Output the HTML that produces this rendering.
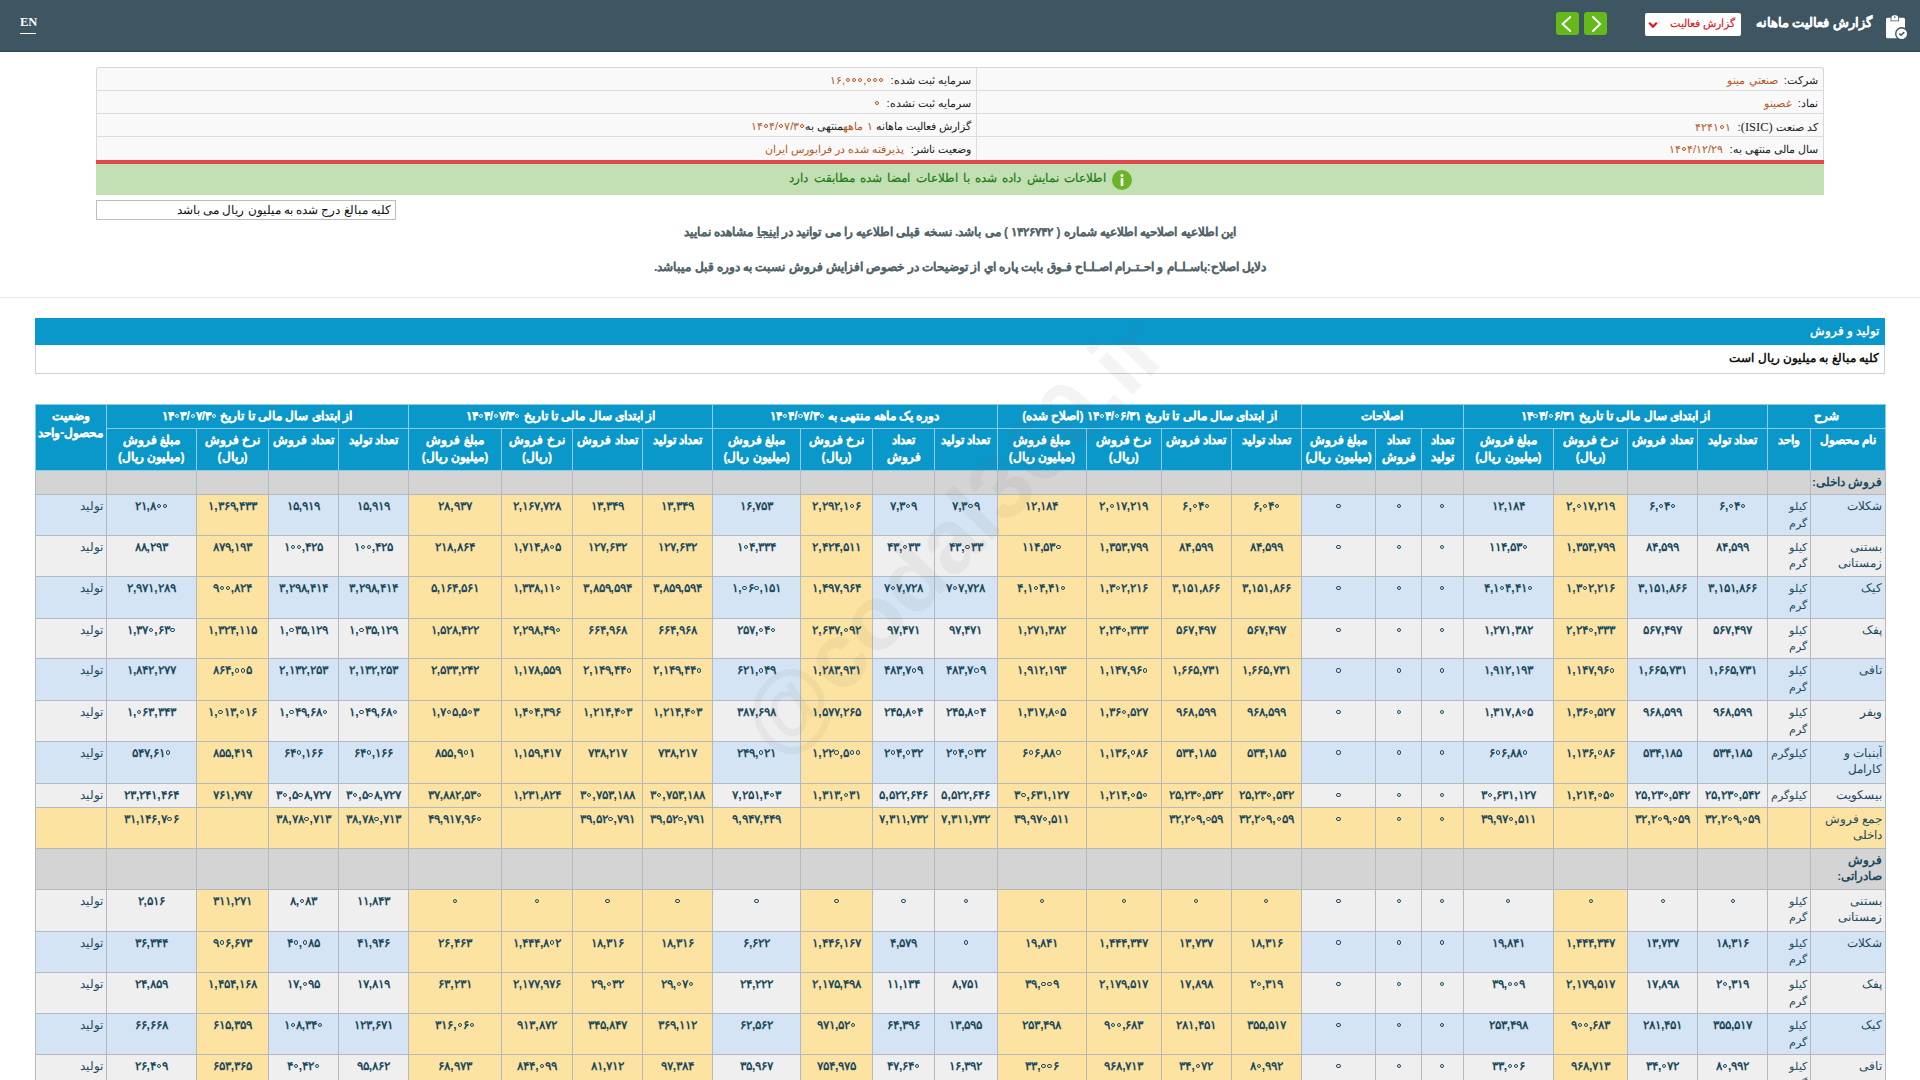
<!DOCTYPE html>
<html lang="fa" dir="rtl"><head><meta charset="utf-8"><title>گزارش فعالیت ماهانه</title>
<style>
*{box-sizing:border-box}
html,body{margin:0;padding:0;background:#fff;width:1920px;height:1080px;overflow:hidden}
body{font-family:"Liberation Sans",sans-serif;font-size:12px;color:#333;position:relative;direction:rtl}
.nav{position:absolute;left:0;top:0;width:1920px;height:52px;background:#3e5562;border-bottom:1px solid #34474f}
.en{position:absolute;left:20px;top:15px;font-family:"Liberation Serif",serif;font-size:12.5px;font-weight:bold;color:#fff;direction:ltr}
.en-u{position:absolute;left:20px;top:33px;width:16px;height:1px;background:#fff}
.ntitle{position:absolute;right:48px;top:15px;font-size:13.2px;-webkit-text-stroke:0.2px #fff;font-weight:bold;color:#fff;white-space:nowrap}
.dd{position:absolute;left:1645px;top:13px;width:96px;height:23px;background:#fff;border-radius:2px}
.dd span{position:absolute;right:6px;top:4px;color:#e1141d;font-size:11.2px;-webkit-text-stroke:0.15px #e1141d;white-space:nowrap}
.btn{position:absolute;top:12px;width:23px;height:23px;background:#66b91b;border-radius:3px}
.info{position:absolute;left:96px;top:67px;width:1728px;height:94px;border:1px solid #d8d8d8;border-bottom:none;border-radius:3px 3px 0 0;background:#f9f9f9}
.irow{position:absolute;left:0;width:1726px;height:1px;background:#dcdcdc}
.ivl{position:absolute;left:879px;top:0;width:1px;height:93px;background:#dcdcdc}
.il{position:absolute;white-space:nowrap;font-size:11.3px;color:#222}
.il b{font-weight:normal;color:#b8561d}
.redl{position:absolute;left:96px;top:160px;width:1728px;height:4px;background:#e04a4a}
.green{position:absolute;left:96px;top:164px;width:1728px;height:31px;background:#c2e0b3}
.gtxt{position:absolute;right:718px;top:7px;font-size:12.2px;word-spacing:1.9px;font-weight:normal;color:#237a18;-webkit-text-stroke:0.2px #237a18;white-space:nowrap}
.gicon{position:absolute;left:1016px;top:6px;width:20px;height:20px;border-radius:50%;background:#6db32a}
.note{position:absolute;left:96px;top:200px;width:300px;height:20px;border:1px solid #bcbcbc;background:#fff}
.note span{position:absolute;right:4px;top:2px;font-size:11.8px;color:#111;white-space:nowrap}
.msg{position:absolute;left:0;width:1920px;text-align:center;font-size:11.9px;font-weight:bold;color:#52656b;-webkit-text-stroke:0.15px #52656b;white-space:nowrap}
.hr{position:absolute;left:0;top:297px;width:1920px;height:1px;background:#e6e6e6}
.bluebar{position:absolute;left:35px;top:318px;width:1850px;height:27px;background:#0a98ca}
.bluebar span{position:absolute;right:6px;top:6px;color:#fff;font-weight:bold;font-size:11.5px;white-space:nowrap}
.wbox{position:absolute;left:35px;top:345px;width:1850px;height:29px;border:1px solid #cfcfcf;border-top:none;background:#fff}
.wbox span{position:absolute;right:5px;top:6px;color:#111;font-weight:bold;font-size:12px;white-space:nowrap}
table.grid{position:absolute;left:35px;top:404px;width:1850px;table-layout:fixed;border-collapse:collapse;direction:rtl}
.grid th{background:#0a98ca;color:#fff;font-weight:bold;-webkit-text-stroke:0.2px #fff;font-size:12px;border:1px solid #8fcbe6;padding:3px 2px;vertical-align:top;line-height:17px;text-align:center}
.grid td{border:1px solid #b4b9bf;padding:3px 3px;vertical-align:top;line-height:16.5px;text-align:center;color:#1c4a5e;font-size:12px;white-space:normal}
.grid td.r{text-align:right;font-weight:normal;font-size:11.4px}
.grid td.n{font-weight:bold}
.grid td.s{font-size:12.3px}
.grid td.nm{font-size:12px}
.grid td.b{font-weight:bold;white-space:nowrap;font-size:11.8px}
.lb{background:#d4e4f4}
.lg{background:#efefef}
.y{background:#fde3a1}
.g{background:#d4d4d4}
.wm{position:absolute;left:670px;top:491px;transform:rotate(-46deg);font-size:91px;font-weight:bold;color:rgba(110,110,110,0.075);transform-origin:50% 50%;white-space:nowrap;direction:ltr;pointer-events:none;font-family:"Liberation Sans",sans-serif;z-index:5;line-height:1}

.nb{unicode-bidi:isolate;direction:ltr}
.z{display:inline-block;width:6px;height:6px;position:relative;vertical-align:baseline}
.z::after{content:"";position:absolute;left:0.9px;top:-0.1px;width:4.2px;height:4.2px;box-sizing:border-box;border:1.3px solid currentColor;border-radius:50%}

</style></head><body>
<div class="nav">
  <div class="en">EN</div><div class="en-u"></div>
  <svg style="position:absolute;left:1884px;top:14px" width="25" height="26" viewBox="0 0 25 26">
    <rect x="2" y="3.8" width="19" height="20.5" rx="1.5" fill="#fff"/>
    <path d="M6.6 7.2 V4 A3.4 3.4 0 0 1 10 0.6 H11.6 A3.4 3.4 0 0 1 15 4 V7.2 Z" fill="#3e5562"/>
    <path d="M7.4 6.4 V4 A2.8 2.8 0 0 1 10.2 1.2 H11.4 A2.8 2.8 0 0 1 14.2 4 V6.4 Z" fill="#fff"/>
    <circle cx="10.8" cy="3.1" r="0.8" fill="#3e5562"/>
    <circle cx="17.7" cy="19.7" r="6.7" fill="#3e5562"/>
    <circle cx="17.7" cy="19.7" r="5.3" fill="#fff"/>
    <path d="M15.5 20 L17 21.2 L19.8 18.6" stroke="#3e5562" stroke-width="1.5" fill="none" stroke-linecap="round" stroke-linejoin="round"/>
  </svg>
  <div class="ntitle">گزارش فعالیت ماهانه</div>
  <div class="dd"><span>گزارش فعالیت</span>
    <svg style="position:absolute;left:3px;top:8px" width="10" height="8" viewBox="0 0 10 8"><path d="M1.2 1.8 L5 5.6 L8.8 1.8" stroke="#e1141d" stroke-width="2.2" fill="none"/></svg>
  </div>
  <div class="btn" style="left:1556px"><svg width="23" height="23" viewBox="0 0 23 23"><path d="M14.3 5 L6.6 12 L14.3 19" stroke="#fff" stroke-width="1.9" fill="none" stroke-linecap="round"/></svg></div>
  <div class="btn" style="left:1584px"><svg width="23" height="23" viewBox="0 0 23 23"><path d="M9 5 L16.2 12 L9 19" stroke="#fff" stroke-width="1.9" fill="none" stroke-linecap="round"/></svg></div>
</div>

<div class="info">
  <div class="irow" style="top:22px"></div>
  <div class="irow" style="top:45px"></div>
  <div class="irow" style="top:68px"></div>
  <div class="ivl"></div>
  <div class="il" style="right:5px;top:6px">شرکت:&nbsp; <b>صنعتي مينو</b></div>
  <div class="il" style="right:5px;top:29px">نماد:&nbsp; <b>غصينو</b></div>
  <div class="il" style="right:5px;top:52px">کد صنعت <span style="font-family:'Liberation Serif',serif;font-size:12.5px">(ISIC)</span>:&nbsp; <b><span dir="ltr" class="nb">۴۲۴۱<i class="z"></i>۱</span></b></div>
  <div class="il" style="right:5px;top:75px">سال مالی منتهی به:&nbsp; <b><span dir="ltr" class="nb">۱۴<i class="z"></i>۴/۱۲/۲۹</span></b></div>
  <div class="il" style="right:852px;top:6px">سرمایه ثبت شده:&nbsp; <b><span dir="ltr" class="nb">۱۶,<i class="z"></i><i class="z"></i><i class="z"></i>,<i class="z"></i><i class="z"></i><i class="z"></i></span></b></div>
  <div class="il" style="right:852px;top:29px">سرمایه ثبت نشده:&nbsp; <b><span dir="ltr" class="nb"><i class="z"></i></span></b></div>
  <div class="il" style="right:852px;top:52px">گزارش فعالیت ماهانه <b>۱ ماهه</b>منتهی به<b><span dir="ltr" class="nb">۱۴<i class="z"></i>۴/<i class="z"></i>۷/۳<i class="z"></i></span></b></div>
  <div class="il" style="right:852px;top:75px">وضعیت ناشر:&nbsp; <b>پذیرفته شده در فرابورس ایران</b></div>
</div>
<div class="redl"></div>
<div class="green">
  <div class="gtxt">اطلاعات نمایش داده شده با اطلاعات امضا شده مطابقت دارد</div>
  <div class="gicon"><svg width="20" height="20" viewBox="0 0 20 20"><circle cx="10" cy="5.5" r="1.5" fill="#fff"/><rect x="8.7" y="8" width="2.6" height="8" fill="#fff"/></svg></div>
</div>
<div class="note"><span>کلیه مبالغ درج شده به میلیون ریال می باشد</span></div>
<div class="msg" style="top:225px">این اطلاعیه اصلاحیه اطلاعیه شماره ( ۱۴۲۶۷۴۲ ) می باشد. نسخه قبلی اطلاعیه را می توانید در <u>اینجا</u> مشاهده نمایید</div>
<div class="msg" style="top:260px">دلایل اصلاح:باسـلـام و احـتـرام اصـلـاح فـوق بابت پاره اي از توضیحات در خصوص افزایش فروش نسبت به دوره قبل میباشد.</div>
<div class="hr"></div>
<div class="bluebar"><span>تولید و فروش</span></div>
<div class="wbox"><span>کلیه مبالغ به میلیون ریال است</span></div>
<div class="wm">@codal360.ir</div>

<table class="grid"><colgroup><col style="width:75px"><col style="width:43px"><col style="width:70px"><col style="width:70px"><col style="width:74px"><col style="width:90.5px"><col style="width:41.5px"><col style="width:46px"><col style="width:74px"><col style="width:70.5px"><col style="width:70px"><col style="width:74.5px"><col style="width:89.5px"><col style="width:62.5px"><col style="width:62px"><col style="width:72px"><col style="width:88px"><col style="width:70px"><col style="width:70px"><col style="width:71px"><col style="width:93px"><col style="width:70px"><col style="width:70px"><col style="width:72px"><col style="width:90.5px"><col style="width:70.5px"></colgroup>
<thead><tr style="height:24px">
<th colspan="2">شرح</th>
<th colspan="4">از ابتدای سال مالی تا تاریخ <span dir="ltr" class="nb">۱۴<i class="z"></i>۴/<i class="z"></i>۶/۳۱</span></th>
<th colspan="3">اصلاحات</th>
<th colspan="4">از ابتدای سال مالی تا تاریخ <span dir="ltr" class="nb">۱۴<i class="z"></i>۴/<i class="z"></i>۶/۳۱</span> (اصلاح شده)</th>
<th colspan="4">دوره یک ماهه منتهی به <span dir="ltr" class="nb">۱۴<i class="z"></i>۴/<i class="z"></i>۷/۳<i class="z"></i></span></th>
<th colspan="4">از ابتدای سال مالی تا تاریخ <span dir="ltr" class="nb">۱۴<i class="z"></i>۴/<i class="z"></i>۷/۳<i class="z"></i></span></th>
<th colspan="4">از ابتدای سال مالی تا تاریخ <span dir="ltr" class="nb">۱۴<i class="z"></i>۳/<i class="z"></i>۷/۳<i class="z"></i></span></th>
<th rowspan="2" class="st">وضعیت محصول-واحد</th>
</tr>
<tr style="height:42px">
<th>نام محصول</th><th>واحد</th>
<th>تعداد تولید</th><th>تعداد فروش</th><th>نرخ فروش (ریال)</th><th>مبلغ فروش (میلیون ریال)</th>
<th>تعداد تولید</th><th>تعداد فروش</th><th>مبلغ فروش (میلیون ریال)</th>
<th>تعداد تولید</th><th>تعداد فروش</th><th>نرخ فروش (ریال)</th><th>مبلغ فروش (میلیون ریال)</th>
<th>تعداد تولید</th><th>تعداد فروش</th><th>نرخ فروش (ریال)</th><th>مبلغ فروش (میلیون ریال)</th>
<th>تعداد تولید</th><th>تعداد فروش</th><th>نرخ فروش (ریال)</th><th>مبلغ فروش (میلیون ریال)</th>
<th>تعداد تولید</th><th>تعداد فروش</th><th>نرخ فروش (ریال)</th><th>مبلغ فروش (میلیون ریال)</th>
</tr></thead>
<tbody><tr style="height:24px"><td class="g r b">فروش داخلی:</td><td class="g"></td><td class="g"></td><td class="g"></td><td class="g"></td><td class="g"></td><td class="g"></td><td class="g"></td><td class="g"></td><td class="g"></td><td class="g"></td><td class="g"></td><td class="g"></td><td class="g"></td><td class="g"></td><td class="g"></td><td class="g"></td><td class="g"></td><td class="g"></td><td class="g"></td><td class="g"></td><td class="g"></td><td class="g"></td><td class="g"></td><td class="g"></td><td class="g"></td></tr><tr style="height:40.6px"><td class="lb r nm">شکلات</td><td class="lb r">کیلو گرم</td><td class="lb n"><span dir="ltr" class="nb">۶,<i class="z"></i>۴<i class="z"></i></span></td><td class="lb n"><span dir="ltr" class="nb">۶,<i class="z"></i>۴<i class="z"></i></span></td><td class="y n"><span dir="ltr" class="nb">۲,<i class="z"></i>۱۷,۲۱۹</span></td><td class="lb n"><span dir="ltr" class="nb">۱۲,۱۸۴</span></td><td class="lb n"><span dir="ltr" class="nb"><i class="z"></i></span></td><td class="lb n"><span dir="ltr" class="nb"><i class="z"></i></span></td><td class="lb n"><span dir="ltr" class="nb"><i class="z"></i></span></td><td class="y n"><span dir="ltr" class="nb">۶,<i class="z"></i>۴<i class="z"></i></span></td><td class="y n"><span dir="ltr" class="nb">۶,<i class="z"></i>۴<i class="z"></i></span></td><td class="y n"><span dir="ltr" class="nb">۲,<i class="z"></i>۱۷,۲۱۹</span></td><td class="y n"><span dir="ltr" class="nb">۱۲,۱۸۴</span></td><td class="lb n"><span dir="ltr" class="nb">۷,۳<i class="z"></i>۹</span></td><td class="lb n"><span dir="ltr" class="nb">۷,۳<i class="z"></i>۹</span></td><td class="y n"><span dir="ltr" class="nb">۲,۲۹۲,۱<i class="z"></i>۶</span></td><td class="lb n"><span dir="ltr" class="nb">۱۶,۷۵۳</span></td><td class="y n"><span dir="ltr" class="nb">۱۳,۳۴۹</span></td><td class="y n"><span dir="ltr" class="nb">۱۳,۳۴۹</span></td><td class="y n"><span dir="ltr" class="nb">۲,۱۶۷,۷۲۸</span></td><td class="y n"><span dir="ltr" class="nb">۲۸,۹۳۷</span></td><td class="lb n"><span dir="ltr" class="nb">۱۵,۹۱۹</span></td><td class="lb n"><span dir="ltr" class="nb">۱۵,۹۱۹</span></td><td class="y n"><span dir="ltr" class="nb">۱,۳۶۹,۴۳۳</span></td><td class="lb n"><span dir="ltr" class="nb">۲۱,۸<i class="z"></i><i class="z"></i></span></td><td class="lb r s">تولید</td></tr><tr style="height:41.7px"><td class="lg r nm">بستنی زمستانی</td><td class="lg r">کیلو گرم</td><td class="lg n"><span dir="ltr" class="nb">۸۴,۵۹۹</span></td><td class="lg n"><span dir="ltr" class="nb">۸۴,۵۹۹</span></td><td class="y n"><span dir="ltr" class="nb">۱,۳۵۳,۷۹۹</span></td><td class="lg n"><span dir="ltr" class="nb">۱۱۴,۵۳<i class="z"></i></span></td><td class="lg n"><span dir="ltr" class="nb"><i class="z"></i></span></td><td class="lg n"><span dir="ltr" class="nb"><i class="z"></i></span></td><td class="lg n"><span dir="ltr" class="nb"><i class="z"></i></span></td><td class="y n"><span dir="ltr" class="nb">۸۴,۵۹۹</span></td><td class="y n"><span dir="ltr" class="nb">۸۴,۵۹۹</span></td><td class="y n"><span dir="ltr" class="nb">۱,۳۵۳,۷۹۹</span></td><td class="y n"><span dir="ltr" class="nb">۱۱۴,۵۳<i class="z"></i></span></td><td class="lg n"><span dir="ltr" class="nb">۴۳,<i class="z"></i>۳۳</span></td><td class="lg n"><span dir="ltr" class="nb">۴۳,<i class="z"></i>۳۳</span></td><td class="y n"><span dir="ltr" class="nb">۲,۴۲۴,۵۱۱</span></td><td class="lg n"><span dir="ltr" class="nb">۱<i class="z"></i>۴,۳۳۴</span></td><td class="y n"><span dir="ltr" class="nb">۱۲۷,۶۳۲</span></td><td class="y n"><span dir="ltr" class="nb">۱۲۷,۶۳۲</span></td><td class="y n"><span dir="ltr" class="nb">۱,۷۱۴,۸<i class="z"></i>۵</span></td><td class="y n"><span dir="ltr" class="nb">۲۱۸,۸۶۴</span></td><td class="lg n"><span dir="ltr" class="nb">۱<i class="z"></i><i class="z"></i>,۴۲۵</span></td><td class="lg n"><span dir="ltr" class="nb">۱<i class="z"></i><i class="z"></i>,۴۲۵</span></td><td class="y n"><span dir="ltr" class="nb">۸۷۹,۱۹۳</span></td><td class="lg n"><span dir="ltr" class="nb">۸۸,۲۹۳</span></td><td class="lg r s">تولید</td></tr><tr style="height:41.5px"><td class="lb r nm">کیک</td><td class="lb r">کیلو گرم</td><td class="lb n"><span dir="ltr" class="nb">۳,۱۵۱,۸۶۶</span></td><td class="lb n"><span dir="ltr" class="nb">۳,۱۵۱,۸۶۶</span></td><td class="y n"><span dir="ltr" class="nb">۱,۳<i class="z"></i>۲,۲۱۶</span></td><td class="lb n"><span dir="ltr" class="nb">۴,۱<i class="z"></i>۴,۴۱<i class="z"></i></span></td><td class="lb n"><span dir="ltr" class="nb"><i class="z"></i></span></td><td class="lb n"><span dir="ltr" class="nb"><i class="z"></i></span></td><td class="lb n"><span dir="ltr" class="nb"><i class="z"></i></span></td><td class="y n"><span dir="ltr" class="nb">۳,۱۵۱,۸۶۶</span></td><td class="y n"><span dir="ltr" class="nb">۳,۱۵۱,۸۶۶</span></td><td class="y n"><span dir="ltr" class="nb">۱,۳<i class="z"></i>۲,۲۱۶</span></td><td class="y n"><span dir="ltr" class="nb">۴,۱<i class="z"></i>۴,۴۱<i class="z"></i></span></td><td class="lb n"><span dir="ltr" class="nb">۷<i class="z"></i>۷,۷۲۸</span></td><td class="lb n"><span dir="ltr" class="nb">۷<i class="z"></i>۷,۷۲۸</span></td><td class="y n"><span dir="ltr" class="nb">۱,۴۹۷,۹۶۴</span></td><td class="lb n"><span dir="ltr" class="nb">۱,<i class="z"></i>۶<i class="z"></i>,۱۵۱</span></td><td class="y n"><span dir="ltr" class="nb">۳,۸۵۹,۵۹۴</span></td><td class="y n"><span dir="ltr" class="nb">۳,۸۵۹,۵۹۴</span></td><td class="y n"><span dir="ltr" class="nb">۱,۳۳۸,۱۱<i class="z"></i></span></td><td class="y n"><span dir="ltr" class="nb">۵,۱۶۴,۵۶۱</span></td><td class="lb n"><span dir="ltr" class="nb">۳,۲۹۸,۴۱۴</span></td><td class="lb n"><span dir="ltr" class="nb">۳,۲۹۸,۴۱۴</span></td><td class="y n"><span dir="ltr" class="nb">۹<i class="z"></i><i class="z"></i>,۸۲۴</span></td><td class="lb n"><span dir="ltr" class="nb">۲,۹۷۱,۲۸۹</span></td><td class="lb r s">تولید</td></tr><tr style="height:40.7px"><td class="lg r nm">پفک</td><td class="lg r">کیلو گرم</td><td class="lg n"><span dir="ltr" class="nb">۵۶۷,۴۹۷</span></td><td class="lg n"><span dir="ltr" class="nb">۵۶۷,۴۹۷</span></td><td class="y n"><span dir="ltr" class="nb">۲,۲۴<i class="z"></i>,۳۳۳</span></td><td class="lg n"><span dir="ltr" class="nb">۱,۲۷۱,۳۸۲</span></td><td class="lg n"><span dir="ltr" class="nb"><i class="z"></i></span></td><td class="lg n"><span dir="ltr" class="nb"><i class="z"></i></span></td><td class="lg n"><span dir="ltr" class="nb"><i class="z"></i></span></td><td class="y n"><span dir="ltr" class="nb">۵۶۷,۴۹۷</span></td><td class="y n"><span dir="ltr" class="nb">۵۶۷,۴۹۷</span></td><td class="y n"><span dir="ltr" class="nb">۲,۲۴<i class="z"></i>,۳۳۳</span></td><td class="y n"><span dir="ltr" class="nb">۱,۲۷۱,۳۸۲</span></td><td class="lg n"><span dir="ltr" class="nb">۹۷,۴۷۱</span></td><td class="lg n"><span dir="ltr" class="nb">۹۷,۴۷۱</span></td><td class="y n"><span dir="ltr" class="nb">۲,۶۳۷,<i class="z"></i>۹۲</span></td><td class="lg n"><span dir="ltr" class="nb">۲۵۷,<i class="z"></i>۴<i class="z"></i></span></td><td class="y n"><span dir="ltr" class="nb">۶۶۴,۹۶۸</span></td><td class="y n"><span dir="ltr" class="nb">۶۶۴,۹۶۸</span></td><td class="y n"><span dir="ltr" class="nb">۲,۲۹۸,۴۹<i class="z"></i></span></td><td class="y n"><span dir="ltr" class="nb">۱,۵۲۸,۴۲۲</span></td><td class="lg n"><span dir="ltr" class="nb">۱,<i class="z"></i>۳۵,۱۲۹</span></td><td class="lg n"><span dir="ltr" class="nb">۱,<i class="z"></i>۳۵,۱۲۹</span></td><td class="y n"><span dir="ltr" class="nb">۱,۳۲۴,۱۱۵</span></td><td class="lg n"><span dir="ltr" class="nb">۱,۳۷<i class="z"></i>,۶۳<i class="z"></i></span></td><td class="lg r s">تولید</td></tr><tr style="height:41.8px"><td class="lb r nm">تافی</td><td class="lb r">کیلو گرم</td><td class="lb n"><span dir="ltr" class="nb">۱,۶۶۵,۷۳۱</span></td><td class="lb n"><span dir="ltr" class="nb">۱,۶۶۵,۷۳۱</span></td><td class="y n"><span dir="ltr" class="nb">۱,۱۴۷,۹۶<i class="z"></i></span></td><td class="lb n"><span dir="ltr" class="nb">۱,۹۱۲,۱۹۳</span></td><td class="lb n"><span dir="ltr" class="nb"><i class="z"></i></span></td><td class="lb n"><span dir="ltr" class="nb"><i class="z"></i></span></td><td class="lb n"><span dir="ltr" class="nb"><i class="z"></i></span></td><td class="y n"><span dir="ltr" class="nb">۱,۶۶۵,۷۳۱</span></td><td class="y n"><span dir="ltr" class="nb">۱,۶۶۵,۷۳۱</span></td><td class="y n"><span dir="ltr" class="nb">۱,۱۴۷,۹۶<i class="z"></i></span></td><td class="y n"><span dir="ltr" class="nb">۱,۹۱۲,۱۹۳</span></td><td class="lb n"><span dir="ltr" class="nb">۴۸۳,۷<i class="z"></i>۹</span></td><td class="lb n"><span dir="ltr" class="nb">۴۸۳,۷<i class="z"></i>۹</span></td><td class="y n"><span dir="ltr" class="nb">۱,۲۸۳,۹۳۱</span></td><td class="lb n"><span dir="ltr" class="nb">۶۲۱,<i class="z"></i>۴۹</span></td><td class="y n"><span dir="ltr" class="nb">۲,۱۴۹,۴۴<i class="z"></i></span></td><td class="y n"><span dir="ltr" class="nb">۲,۱۴۹,۴۴<i class="z"></i></span></td><td class="y n"><span dir="ltr" class="nb">۱,۱۷۸,۵۵۹</span></td><td class="y n"><span dir="ltr" class="nb">۲,۵۳۳,۲۴۲</span></td><td class="lb n"><span dir="ltr" class="nb">۲,۱۳۲,۲۵۳</span></td><td class="lb n"><span dir="ltr" class="nb">۲,۱۳۲,۲۵۳</span></td><td class="y n"><span dir="ltr" class="nb">۸۶۴,<i class="z"></i><i class="z"></i>۵</span></td><td class="lb n"><span dir="ltr" class="nb">۱,۸۴۲,۲۷۷</span></td><td class="lb r s">تولید</td></tr><tr style="height:40.3px"><td class="lg r nm">ویفر</td><td class="lg r">کیلو گرم</td><td class="lg n"><span dir="ltr" class="nb">۹۶۸,۵۹۹</span></td><td class="lg n"><span dir="ltr" class="nb">۹۶۸,۵۹۹</span></td><td class="y n"><span dir="ltr" class="nb">۱,۳۶<i class="z"></i>,۵۲۷</span></td><td class="lg n"><span dir="ltr" class="nb">۱,۳۱۷,۸<i class="z"></i>۵</span></td><td class="lg n"><span dir="ltr" class="nb"><i class="z"></i></span></td><td class="lg n"><span dir="ltr" class="nb"><i class="z"></i></span></td><td class="lg n"><span dir="ltr" class="nb"><i class="z"></i></span></td><td class="y n"><span dir="ltr" class="nb">۹۶۸,۵۹۹</span></td><td class="y n"><span dir="ltr" class="nb">۹۶۸,۵۹۹</span></td><td class="y n"><span dir="ltr" class="nb">۱,۳۶<i class="z"></i>,۵۲۷</span></td><td class="y n"><span dir="ltr" class="nb">۱,۳۱۷,۸<i class="z"></i>۵</span></td><td class="lg n"><span dir="ltr" class="nb">۲۴۵,۸<i class="z"></i>۴</span></td><td class="lg n"><span dir="ltr" class="nb">۲۴۵,۸<i class="z"></i>۴</span></td><td class="y n"><span dir="ltr" class="nb">۱,۵۷۷,۲۶۵</span></td><td class="lg n"><span dir="ltr" class="nb">۳۸۷,۶۹۸</span></td><td class="y n"><span dir="ltr" class="nb">۱,۲۱۴,۴<i class="z"></i>۳</span></td><td class="y n"><span dir="ltr" class="nb">۱,۲۱۴,۴<i class="z"></i>۳</span></td><td class="y n"><span dir="ltr" class="nb">۱,۴<i class="z"></i>۴,۳۹۶</span></td><td class="y n"><span dir="ltr" class="nb">۱,۷<i class="z"></i>۵,۵<i class="z"></i>۳</span></td><td class="lg n"><span dir="ltr" class="nb">۱,<i class="z"></i>۴۹,۶۸<i class="z"></i></span></td><td class="lg n"><span dir="ltr" class="nb">۱,<i class="z"></i>۴۹,۶۸<i class="z"></i></span></td><td class="y n"><span dir="ltr" class="nb">۱,<i class="z"></i>۱۳,<i class="z"></i>۱۶</span></td><td class="lg n"><span dir="ltr" class="nb">۱,<i class="z"></i>۶۳,۳۴۳</span></td><td class="lg r s">تولید</td></tr><tr style="height:42.3px"><td class="lb r nm">آبنبات و<br>کارامل</td><td class="lb r">کیلوگرم</td><td class="lb n"><span dir="ltr" class="nb">۵۳۴,۱۸۵</span></td><td class="lb n"><span dir="ltr" class="nb">۵۳۴,۱۸۵</span></td><td class="y n"><span dir="ltr" class="nb">۱,۱۳۶,<i class="z"></i>۸۶</span></td><td class="lb n"><span dir="ltr" class="nb">۶<i class="z"></i>۶,۸۸<i class="z"></i></span></td><td class="lb n"><span dir="ltr" class="nb"><i class="z"></i></span></td><td class="lb n"><span dir="ltr" class="nb"><i class="z"></i></span></td><td class="lb n"><span dir="ltr" class="nb"><i class="z"></i></span></td><td class="y n"><span dir="ltr" class="nb">۵۳۴,۱۸۵</span></td><td class="y n"><span dir="ltr" class="nb">۵۳۴,۱۸۵</span></td><td class="y n"><span dir="ltr" class="nb">۱,۱۳۶,<i class="z"></i>۸۶</span></td><td class="y n"><span dir="ltr" class="nb">۶<i class="z"></i>۶,۸۸<i class="z"></i></span></td><td class="lb n"><span dir="ltr" class="nb">۲<i class="z"></i>۴,<i class="z"></i>۳۲</span></td><td class="lb n"><span dir="ltr" class="nb">۲<i class="z"></i>۴,<i class="z"></i>۳۲</span></td><td class="y n"><span dir="ltr" class="nb">۱,۲۲<i class="z"></i>,۵<i class="z"></i><i class="z"></i></span></td><td class="lb n"><span dir="ltr" class="nb">۲۴۹,<i class="z"></i>۲۱</span></td><td class="y n"><span dir="ltr" class="nb">۷۳۸,۲۱۷</span></td><td class="y n"><span dir="ltr" class="nb">۷۳۸,۲۱۷</span></td><td class="y n"><span dir="ltr" class="nb">۱,۱۵۹,۴۱۷</span></td><td class="y n"><span dir="ltr" class="nb">۸۵۵,۹<i class="z"></i>۱</span></td><td class="lb n"><span dir="ltr" class="nb">۶۴<i class="z"></i>,۱۶۶</span></td><td class="lb n"><span dir="ltr" class="nb">۶۴<i class="z"></i>,۱۶۶</span></td><td class="y n"><span dir="ltr" class="nb">۸۵۵,۴۱۹</span></td><td class="lb n"><span dir="ltr" class="nb">۵۴۷,۶۱<i class="z"></i></span></td><td class="lb r s">تولید</td></tr><tr style="height:24px"><td class="lg r nm">بیسکویت</td><td class="lg r">کیلوگرم</td><td class="lg n"><span dir="ltr" class="nb">۲۵,۲۳<i class="z"></i>,۵۴۲</span></td><td class="lg n"><span dir="ltr" class="nb">۲۵,۲۳<i class="z"></i>,۵۴۲</span></td><td class="y n"><span dir="ltr" class="nb">۱,۲۱۴,<i class="z"></i>۵<i class="z"></i></span></td><td class="lg n"><span dir="ltr" class="nb">۳<i class="z"></i>,۶۳۱,۱۲۷</span></td><td class="lg n"><span dir="ltr" class="nb"><i class="z"></i></span></td><td class="lg n"><span dir="ltr" class="nb"><i class="z"></i></span></td><td class="lg n"><span dir="ltr" class="nb"><i class="z"></i></span></td><td class="y n"><span dir="ltr" class="nb">۲۵,۲۳<i class="z"></i>,۵۴۲</span></td><td class="y n"><span dir="ltr" class="nb">۲۵,۲۳<i class="z"></i>,۵۴۲</span></td><td class="y n"><span dir="ltr" class="nb">۱,۲۱۴,<i class="z"></i>۵<i class="z"></i></span></td><td class="y n"><span dir="ltr" class="nb">۳<i class="z"></i>,۶۳۱,۱۲۷</span></td><td class="lg n"><span dir="ltr" class="nb">۵,۵۲۲,۶۴۶</span></td><td class="lg n"><span dir="ltr" class="nb">۵,۵۲۲,۶۴۶</span></td><td class="y n"><span dir="ltr" class="nb">۱,۳۱۳,<i class="z"></i>۳۱</span></td><td class="lg n"><span dir="ltr" class="nb">۷,۲۵۱,۴<i class="z"></i>۳</span></td><td class="y n"><span dir="ltr" class="nb">۳<i class="z"></i>,۷۵۳,۱۸۸</span></td><td class="y n"><span dir="ltr" class="nb">۳<i class="z"></i>,۷۵۳,۱۸۸</span></td><td class="y n"><span dir="ltr" class="nb">۱,۲۳۱,۸۲۴</span></td><td class="y n"><span dir="ltr" class="nb">۳۷,۸۸۲,۵۳<i class="z"></i></span></td><td class="lg n"><span dir="ltr" class="nb">۳<i class="z"></i>,۵<i class="z"></i>۸,۷۲۷</span></td><td class="lg n"><span dir="ltr" class="nb">۳<i class="z"></i>,۵<i class="z"></i>۸,۷۲۷</span></td><td class="y n"><span dir="ltr" class="nb">۷۶۱,۷۹۷</span></td><td class="lg n"><span dir="ltr" class="nb">۲۳,۲۴۱,۴۶۴</span></td><td class="lg r s">تولید</td></tr><tr style="height:40.9px"><td class="y r nm">جمع فروش داخلی</td><td class="y r"></td><td class="y n"><span dir="ltr" class="nb">۳۲,۲<i class="z"></i>۹,<i class="z"></i>۵۹</span></td><td class="y n"><span dir="ltr" class="nb">۳۲,۲<i class="z"></i>۹,<i class="z"></i>۵۹</span></td><td class="y n"></td><td class="y n"><span dir="ltr" class="nb">۳۹,۹۷<i class="z"></i>,۵۱۱</span></td><td class="y n"><span dir="ltr" class="nb"><i class="z"></i></span></td><td class="y n"><span dir="ltr" class="nb"><i class="z"></i></span></td><td class="y n"><span dir="ltr" class="nb"><i class="z"></i></span></td><td class="y n"><span dir="ltr" class="nb">۳۲,۲<i class="z"></i>۹,<i class="z"></i>۵۹</span></td><td class="y n"><span dir="ltr" class="nb">۳۲,۲<i class="z"></i>۹,<i class="z"></i>۵۹</span></td><td class="y n"></td><td class="y n"><span dir="ltr" class="nb">۳۹,۹۷<i class="z"></i>,۵۱۱</span></td><td class="y n"><span dir="ltr" class="nb">۷,۳۱۱,۷۳۲</span></td><td class="y n"><span dir="ltr" class="nb">۷,۳۱۱,۷۳۲</span></td><td class="y n"></td><td class="y n"><span dir="ltr" class="nb">۹,۹۴۷,۴۴۹</span></td><td class="y n"><span dir="ltr" class="nb">۳۹,۵۲<i class="z"></i>,۷۹۱</span></td><td class="y n"><span dir="ltr" class="nb">۳۹,۵۲<i class="z"></i>,۷۹۱</span></td><td class="y n"></td><td class="y n"><span dir="ltr" class="nb">۴۹,۹۱۷,۹۶<i class="z"></i></span></td><td class="y n"><span dir="ltr" class="nb">۳۸,۷۸<i class="z"></i>,۷۱۳</span></td><td class="y n"><span dir="ltr" class="nb">۳۸,۷۸<i class="z"></i>,۷۱۳</span></td><td class="y n"></td><td class="y n"><span dir="ltr" class="nb">۳۱,۱۴۶,۷<i class="z"></i>۶</span></td><td class="y r s"></td></tr><tr style="height:41.2px"><td class="g r b">فروش<br>صادراتی:</td><td class="g"></td><td class="g"></td><td class="g"></td><td class="g"></td><td class="g"></td><td class="g"></td><td class="g"></td><td class="g"></td><td class="g"></td><td class="g"></td><td class="g"></td><td class="g"></td><td class="g"></td><td class="g"></td><td class="g"></td><td class="g"></td><td class="g"></td><td class="g"></td><td class="g"></td><td class="g"></td><td class="g"></td><td class="g"></td><td class="g"></td><td class="g"></td><td class="g"></td></tr><tr style="height:41.6px"><td class="lg r nm">بستنی زمستانی</td><td class="lg r">کیلو گرم</td><td class="lg n"><span dir="ltr" class="nb"><i class="z"></i></span></td><td class="lg n"><span dir="ltr" class="nb"><i class="z"></i></span></td><td class="y n"><span dir="ltr" class="nb"><i class="z"></i></span></td><td class="lg n"><span dir="ltr" class="nb"><i class="z"></i></span></td><td class="lg n"><span dir="ltr" class="nb"><i class="z"></i></span></td><td class="lg n"><span dir="ltr" class="nb"><i class="z"></i></span></td><td class="lg n"><span dir="ltr" class="nb"><i class="z"></i></span></td><td class="y n"><span dir="ltr" class="nb"><i class="z"></i></span></td><td class="y n"><span dir="ltr" class="nb"><i class="z"></i></span></td><td class="y n"><span dir="ltr" class="nb"><i class="z"></i></span></td><td class="y n"><span dir="ltr" class="nb"><i class="z"></i></span></td><td class="lg n"><span dir="ltr" class="nb"><i class="z"></i></span></td><td class="lg n"><span dir="ltr" class="nb"><i class="z"></i></span></td><td class="y n"><span dir="ltr" class="nb"><i class="z"></i></span></td><td class="lg n"><span dir="ltr" class="nb"><i class="z"></i></span></td><td class="y n"><span dir="ltr" class="nb"><i class="z"></i></span></td><td class="y n"><span dir="ltr" class="nb"><i class="z"></i></span></td><td class="y n"><span dir="ltr" class="nb"><i class="z"></i></span></td><td class="y n"><span dir="ltr" class="nb"><i class="z"></i></span></td><td class="lg n"><span dir="ltr" class="nb">۱۱,۸۴۳</span></td><td class="lg n"><span dir="ltr" class="nb">۸,<i class="z"></i>۸۳</span></td><td class="y n"><span dir="ltr" class="nb">۳۱۱,۲۷۱</span></td><td class="lg n"><span dir="ltr" class="nb">۲,۵۱۶</span></td><td class="lg r s">تولید</td></tr><tr style="height:41.5px"><td class="lb r nm">شکلات</td><td class="lb r">کیلو گرم</td><td class="lb n"><span dir="ltr" class="nb">۱۸,۳۱۶</span></td><td class="lb n"><span dir="ltr" class="nb">۱۳,۷۳۷</span></td><td class="y n"><span dir="ltr" class="nb">۱,۴۴۴,۳۴۷</span></td><td class="lb n"><span dir="ltr" class="nb">۱۹,۸۴۱</span></td><td class="lb n"><span dir="ltr" class="nb"><i class="z"></i></span></td><td class="lb n"><span dir="ltr" class="nb"><i class="z"></i></span></td><td class="lb n"><span dir="ltr" class="nb"><i class="z"></i></span></td><td class="y n"><span dir="ltr" class="nb">۱۸,۳۱۶</span></td><td class="y n"><span dir="ltr" class="nb">۱۳,۷۳۷</span></td><td class="y n"><span dir="ltr" class="nb">۱,۴۴۴,۳۴۷</span></td><td class="y n"><span dir="ltr" class="nb">۱۹,۸۴۱</span></td><td class="lb n"><span dir="ltr" class="nb"><i class="z"></i></span></td><td class="lb n"><span dir="ltr" class="nb">۴,۵۷۹</span></td><td class="y n"><span dir="ltr" class="nb">۱,۴۴۶,۱۶۷</span></td><td class="lb n"><span dir="ltr" class="nb">۶,۶۲۲</span></td><td class="y n"><span dir="ltr" class="nb">۱۸,۳۱۶</span></td><td class="y n"><span dir="ltr" class="nb">۱۸,۳۱۶</span></td><td class="y n"><span dir="ltr" class="nb">۱,۴۴۴,۸<i class="z"></i>۲</span></td><td class="y n"><span dir="ltr" class="nb">۲۶,۴۶۳</span></td><td class="lb n"><span dir="ltr" class="nb">۴۱,۹۴۶</span></td><td class="lb n"><span dir="ltr" class="nb">۴<i class="z"></i>,<i class="z"></i>۸۵</span></td><td class="y n"><span dir="ltr" class="nb">۹<i class="z"></i>۶,۶۷۳</span></td><td class="lb n"><span dir="ltr" class="nb">۳۶,۳۴۴</span></td><td class="lb r s">تولید</td></tr><tr style="height:41.1px"><td class="lg r nm">پفک</td><td class="lg r">کیلو گرم</td><td class="lg n"><span dir="ltr" class="nb">۲<i class="z"></i>,۳۱۹</span></td><td class="lg n"><span dir="ltr" class="nb">۱۷,۸۹۸</span></td><td class="y n"><span dir="ltr" class="nb">۲,۱۷۹,۵۱۷</span></td><td class="lg n"><span dir="ltr" class="nb">۳۹,<i class="z"></i><i class="z"></i>۹</span></td><td class="lg n"><span dir="ltr" class="nb"><i class="z"></i></span></td><td class="lg n"><span dir="ltr" class="nb"><i class="z"></i></span></td><td class="lg n"><span dir="ltr" class="nb"><i class="z"></i></span></td><td class="y n"><span dir="ltr" class="nb">۲<i class="z"></i>,۳۱۹</span></td><td class="y n"><span dir="ltr" class="nb">۱۷,۸۹۸</span></td><td class="y n"><span dir="ltr" class="nb">۲,۱۷۹,۵۱۷</span></td><td class="y n"><span dir="ltr" class="nb">۳۹,<i class="z"></i><i class="z"></i>۹</span></td><td class="lg n"><span dir="ltr" class="nb">۸,۷۵۱</span></td><td class="lg n"><span dir="ltr" class="nb">۱۱,۱۳۴</span></td><td class="y n"><span dir="ltr" class="nb">۲,۱۷۵,۴۹۸</span></td><td class="lg n"><span dir="ltr" class="nb">۲۴,۲۲۲</span></td><td class="y n"><span dir="ltr" class="nb">۲۹,<i class="z"></i>۷<i class="z"></i></span></td><td class="y n"><span dir="ltr" class="nb">۲۹,<i class="z"></i>۳۲</span></td><td class="y n"><span dir="ltr" class="nb">۲,۱۷۷,۹۷۶</span></td><td class="y n"><span dir="ltr" class="nb">۶۳,۲۳۱</span></td><td class="lg n"><span dir="ltr" class="nb">۱۷,۸۱۹</span></td><td class="lg n"><span dir="ltr" class="nb">۱۷,<i class="z"></i>۹۵</span></td><td class="y n"><span dir="ltr" class="nb">۱,۴۵۴,۱۶۸</span></td><td class="lg n"><span dir="ltr" class="nb">۲۴,۸۵۹</span></td><td class="lg r s">تولید</td></tr><tr style="height:40.9px"><td class="lb r nm">کیک</td><td class="lb r">کیلو گرم</td><td class="lb n"><span dir="ltr" class="nb">۳۵۵,۵۱۷</span></td><td class="lb n"><span dir="ltr" class="nb">۲۸۱,۴۵۱</span></td><td class="y n"><span dir="ltr" class="nb">۹<i class="z"></i><i class="z"></i>,۶۸۳</span></td><td class="lb n"><span dir="ltr" class="nb">۲۵۳,۴۹۸</span></td><td class="lb n"><span dir="ltr" class="nb"><i class="z"></i></span></td><td class="lb n"><span dir="ltr" class="nb"><i class="z"></i></span></td><td class="lb n"><span dir="ltr" class="nb"><i class="z"></i></span></td><td class="y n"><span dir="ltr" class="nb">۳۵۵,۵۱۷</span></td><td class="y n"><span dir="ltr" class="nb">۲۸۱,۴۵۱</span></td><td class="y n"><span dir="ltr" class="nb">۹<i class="z"></i><i class="z"></i>,۶۸۳</span></td><td class="y n"><span dir="ltr" class="nb">۲۵۳,۴۹۸</span></td><td class="lb n"><span dir="ltr" class="nb">۱۳,۵۹۵</span></td><td class="lb n"><span dir="ltr" class="nb">۶۴,۳۹۶</span></td><td class="y n"><span dir="ltr" class="nb">۹۷۱,۵۲<i class="z"></i></span></td><td class="lb n"><span dir="ltr" class="nb">۶۲,۵۶۲</span></td><td class="y n"><span dir="ltr" class="nb">۳۶۹,۱۱۲</span></td><td class="y n"><span dir="ltr" class="nb">۳۴۵,۸۴۷</span></td><td class="y n"><span dir="ltr" class="nb">۹۱۳,۸۷۲</span></td><td class="y n"><span dir="ltr" class="nb">۳۱۶,<i class="z"></i>۶<i class="z"></i></span></td><td class="lb n"><span dir="ltr" class="nb">۱۲۳,۶۷۱</span></td><td class="lb n"><span dir="ltr" class="nb">۱<i class="z"></i>۸,۳۴<i class="z"></i></span></td><td class="y n"><span dir="ltr" class="nb">۶۱۵,۳۵۹</span></td><td class="lb n"><span dir="ltr" class="nb">۶۶,۶۶۸</span></td><td class="lb r s">تولید</td></tr><tr style="height:41px"><td class="lg r nm">تافی</td><td class="lg r">کیلو گرم</td><td class="lg n"><span dir="ltr" class="nb">۸<i class="z"></i>,۹۹۲</span></td><td class="lg n"><span dir="ltr" class="nb">۳۴,<i class="z"></i>۷۲</span></td><td class="y n"><span dir="ltr" class="nb">۹۶۸,۷۱۳</span></td><td class="lg n"><span dir="ltr" class="nb">۳۳,<i class="z"></i><i class="z"></i>۶</span></td><td class="lg n"><span dir="ltr" class="nb"><i class="z"></i></span></td><td class="lg n"><span dir="ltr" class="nb"><i class="z"></i></span></td><td class="lg n"><span dir="ltr" class="nb"><i class="z"></i></span></td><td class="y n"><span dir="ltr" class="nb">۸<i class="z"></i>,۹۹۲</span></td><td class="y n"><span dir="ltr" class="nb">۳۴,<i class="z"></i>۷۲</span></td><td class="y n"><span dir="ltr" class="nb">۹۶۸,۷۱۳</span></td><td class="y n"><span dir="ltr" class="nb">۳۳,<i class="z"></i><i class="z"></i>۶</span></td><td class="lg n"><span dir="ltr" class="nb">۱۶,۳۹۲</span></td><td class="lg n"><span dir="ltr" class="nb">۴۷,۶۴<i class="z"></i></span></td><td class="y n"><span dir="ltr" class="nb">۷۵۴,۹۷۵</span></td><td class="lg n"><span dir="ltr" class="nb">۳۵,۹۶۷</span></td><td class="y n"><span dir="ltr" class="nb">۹۷,۳۸۴</span></td><td class="y n"><span dir="ltr" class="nb">۸۱,۷۱۲</span></td><td class="y n"><span dir="ltr" class="nb">۸۴۴,<i class="z"></i>۹۹</span></td><td class="y n"><span dir="ltr" class="nb">۶۸,۹۷۳</span></td><td class="lg n"><span dir="ltr" class="nb">۹۵,۸۶۲</span></td><td class="lg n"><span dir="ltr" class="nb">۴<i class="z"></i>,۴۲<i class="z"></i></span></td><td class="y n"><span dir="ltr" class="nb">۶۵۳,۳۶۵</span></td><td class="lg n"><span dir="ltr" class="nb">۲۶,۴<i class="z"></i>۹</span></td><td class="lg r s">تولید</td></tr><tr style="height:41px"><td class="lb r nm">بستنی</td><td class="lb r">کیلو گرم</td><td class="lb n"><span dir="ltr" class="nb"><i class="z"></i></span></td><td class="lb n"><span dir="ltr" class="nb"><i class="z"></i></span></td><td class="y n"><span dir="ltr" class="nb"><i class="z"></i></span></td><td class="lb n"><span dir="ltr" class="nb"><i class="z"></i></span></td><td class="lb n"><span dir="ltr" class="nb"><i class="z"></i></span></td><td class="lb n"><span dir="ltr" class="nb"><i class="z"></i></span></td><td class="lb n"><span dir="ltr" class="nb"><i class="z"></i></span></td><td class="y n"><span dir="ltr" class="nb"><i class="z"></i></span></td><td class="y n"><span dir="ltr" class="nb"><i class="z"></i></span></td><td class="y n"><span dir="ltr" class="nb"><i class="z"></i></span></td><td class="y n"><span dir="ltr" class="nb"><i class="z"></i></span></td><td class="lb n"><span dir="ltr" class="nb"><i class="z"></i></span></td><td class="lb n"><span dir="ltr" class="nb"><i class="z"></i></span></td><td class="y n"><span dir="ltr" class="nb"><i class="z"></i></span></td><td class="lb n"><span dir="ltr" class="nb"><i class="z"></i></span></td><td class="y n"><span dir="ltr" class="nb"><i class="z"></i></span></td><td class="y n"><span dir="ltr" class="nb"><i class="z"></i></span></td><td class="y n"><span dir="ltr" class="nb"><i class="z"></i></span></td><td class="y n"><span dir="ltr" class="nb"><i class="z"></i></span></td><td class="lb n"><span dir="ltr" class="nb"><i class="z"></i></span></td><td class="lb n"><span dir="ltr" class="nb"><i class="z"></i></span></td><td class="y n"><span dir="ltr" class="nb"><i class="z"></i></span></td><td class="lb n"><span dir="ltr" class="nb"><i class="z"></i></span></td><td class="lb r s">تولید</td></tr></tbody></table>
</body></html>
